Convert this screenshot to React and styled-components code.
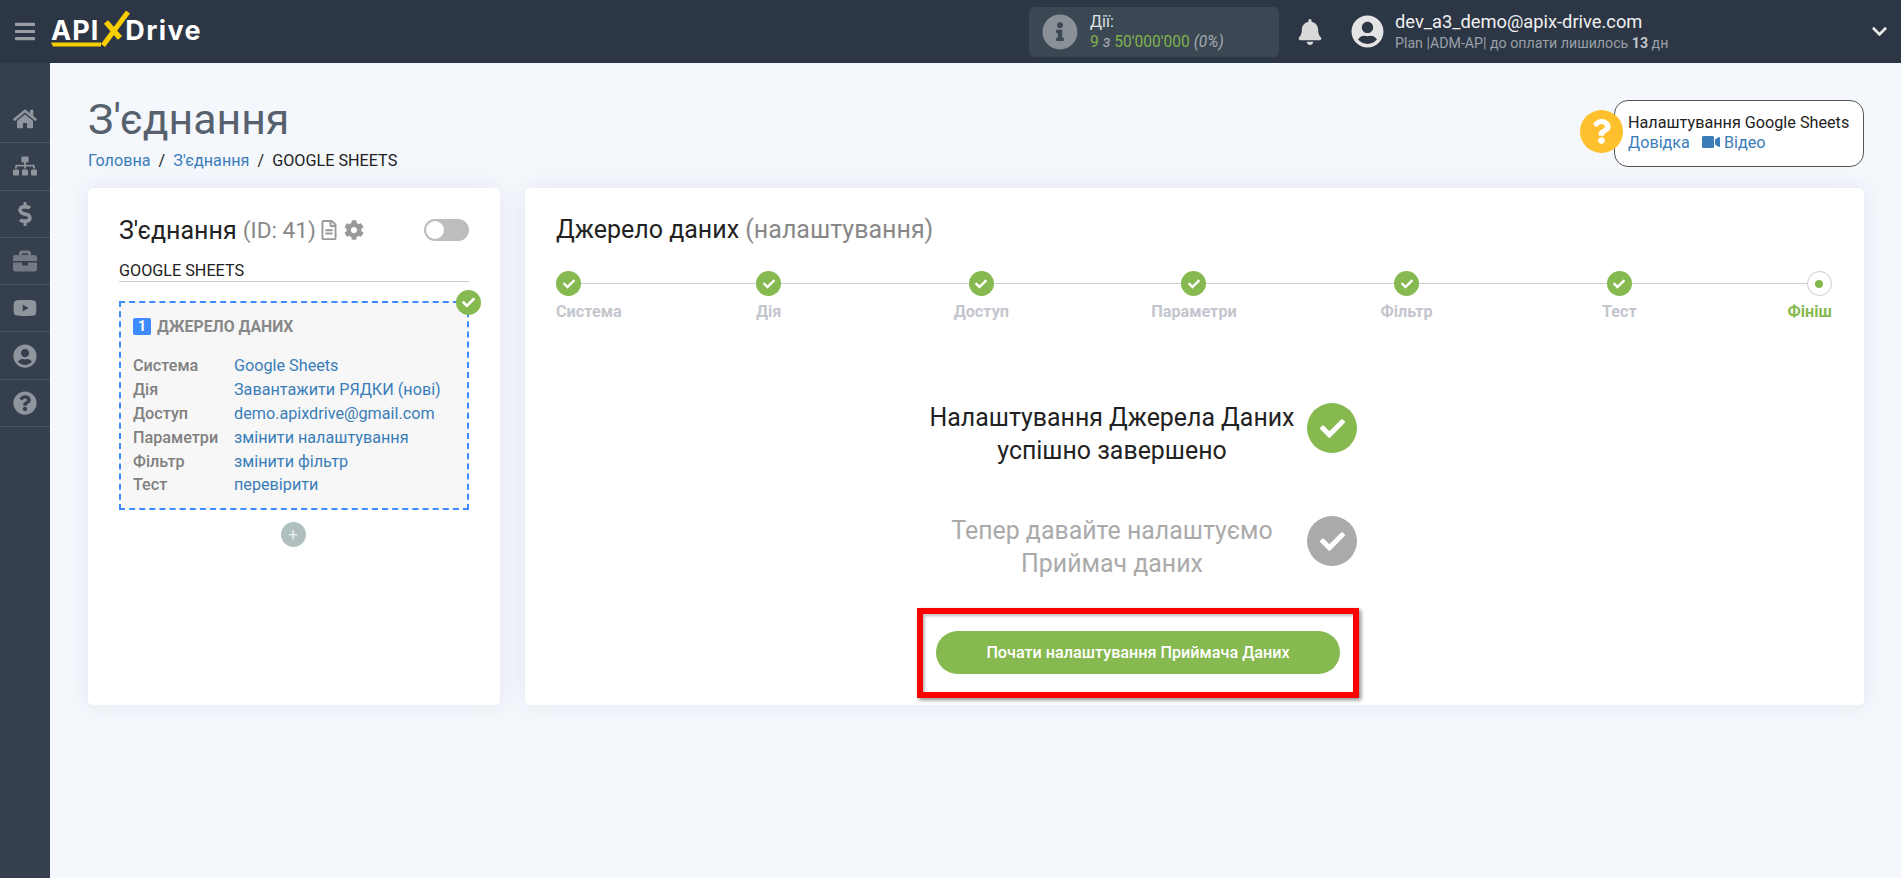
import React from 'react';
import styled, { createGlobalStyle } from 'styled-components';
import {
  FaBars, FaBell, FaBriefcase, FaCheck, FaChevronDown, FaCog, FaDollarSign, FaHome, FaInfoCircle,
  FaQuestion, FaQuestionCircle, FaRegFileAlt, FaSitemap, FaUserCircle, FaVideo, FaYoutube,
} from 'react-icons/fa';

const GlobalStyle = createGlobalStyle`
  * { box-sizing: border-box; }
  html, body { margin: 0; height: 100%; }
  body {
    background: #f4f7fc;
    font-family: Roboto, "Liberation Sans", sans-serif;
    font-size: 16px;
    color: #222;
    overflow: hidden;
  }
`;

const Page = styled.div`
  width: 1901px;
  height: 878px;
  display: grid;
  grid-template-columns: 50px 1fr;
  grid-template-rows: 63px 1fr;
`;

const TopBar = styled.header`
  grid-column: 1 / 3;
  background: #2c3644;
  display: flex;
  align-items: center;
  padding-left: 15px;
  color: #fff;
`;

const Burger = styled(FaBars)`
  width: 20px;
  height: 23px;
  color: #9a9ea4;
  margin-right: 16px;
`;

const Logo = styled.div`
  position: relative;
  display: flex;
  align-items: baseline;
  font-family: Inter, "Noto Sans", sans-serif;
  font-weight: 700;
  font-size: 27px;
  letter-spacing: 1px;
  color: #fff;
  width: 160px;
  margin-top: -2px;
`;

const LogoDrive = styled.span`
  margin-left: 26px;
  letter-spacing: 1.4px;
`;

const LogoMark = styled.svg`
  position: absolute;
  left: 0;
  top: -9px;
  width: 85px;
  height: 44px;
`;

const Actions = styled.div`
  margin-left: 818px;
  width: 250px;
  height: 50px;
  background: #3b4753;
  border-radius: 5px;
  display: flex;
  align-items: center;
  padding-left: 13px;
  gap: 12px;
`;

const ActionsIcon = styled(FaInfoCircle)`
  width: 36px;
  height: 36px;
  color: #8a9097;
`;

const ActionsText = styled.div`
  font-size: 16px;
  line-height: 20px;
  color: #dfe2e5;
`;

const ActionsCount = styled.div`
  color: #7fb24d;
  font-size: 15.6px;
  em { color: #a5abb1; }
`;

const Bell = styled(FaBell)`
  width: 24px;
  height: 26px;
  color: #d9d9d9;
  margin-left: 19px;
`;

const Avatar = styled(FaUserCircle)`
  width: 33px;
  height: 33px;
  color: #e4e4e4;
  margin-left: 29px;
`;

const UserInfo = styled.div`
  margin-left: 11px;
  width: 476px;
`;

const UserMail = styled.div`
  font-size: 18.3px;
  line-height: 22px;
  color: #f0f0f0;
`;

const UserPlan = styled.div`
  font-size: 14.2px;
  line-height: 20px;
  color: #9aa1a9;
  b { font-weight: 700; color: #c2c6ca; }
`;

const Chevron = styled(FaChevronDown)`
  width: 17px;
  height: 17px;
  color: #e8e8e8;
`;

const Sidebar = styled.nav`
  background: #353f4d;
  padding-top: 33px;
`;

const SideItem = styled.div`
  height: 47.3px;
  border-bottom: 1px solid #4b5561;
  display: flex;
  align-items: center;
  justify-content: center;
  color: ${({ $dim }) => ($dim ? '#737a84' : '#8f959c')};
  font-size: 24px;
`;

const Main = styled.main`
  padding: 37px 37px 0 38px;
  min-width: 0;
`;

const HeadRow = styled.div`
  height: 88px;
  display: flex;
  justify-content: space-between;
  align-items: flex-start;
`;

const PageTitle = styled.h1`
  margin: -6px 0 0;
  font-weight: 400;
  font-size: 42.8px;
  line-height: 50px;
  color: #56616d;
`;

const Crumbs = styled.div`
  display: flex;
  gap: 8px;
  margin-top: 7px;
  font-size: 16.2px;
  line-height: 20px;
  color: #222;
`;

const TextLink = styled.a`
  color: #3a7db9;
  text-decoration: none;
`;

const HelpWrap = styled.div`
  position: relative;
  width: 250px;
  height: 67px;
  background: #fff;
  border: 1px solid #555;
  border-radius: 14px;
  padding: 12px 0 0 13px;
  font-size: 16.2px;
  line-height: 20px;
`;

const HelpBadge = styled.div`
  position: absolute;
  left: -35px;
  top: 9px;
  width: 43px;
  height: 43px;
  border-radius: 50%;
  background: #fec12d;
  color: #fff;
  display: flex;
  align-items: center;
  justify-content: center;
  font-size: 25px;
`;

const HelpLinks = styled.div`
  display: flex;
  align-items: center;
  gap: 12px;
  svg { margin-right: 4px; vertical-align: -3px; font-size: 18px; }
`;

const Cards = styled.div`
  display: grid;
  grid-template-columns: 412px 1fr;
  gap: 25px;
`;

const Card = styled.section`
  background: #fff;
  border-radius: 5px;
  box-shadow: 0 0 24px rgba(40, 60, 90, 0.08);
  height: 517px;
`;

const LeftCard = styled(Card)`
  padding: 27px 31px 0;
`;

const ConnTitle = styled.div`
  display: flex;
  align-items: center;
  height: 30px;
  font-size: 25px;
  color: #222;
  white-space: nowrap;
`;

const Muted = styled.span`
  color: #888;
`;

const ConnId = styled(Muted)`
  font-size: 22.6px;
`;

const ConnIcons = styled.span`
  display: flex;
  align-items: center;
  gap: 5px;
  margin-left: 3px;
  color: #999;
  font-size: 20px;
`;

const Toggle = styled.span`
  margin-left: auto;
  width: 45px;
  height: 22px;
  border-radius: 11px;
  background: #bdbdbd;
  padding: 2px;
  &::before {
    content: '';
    display: block;
    width: 18px;
    height: 18px;
    border-radius: 50%;
    background: #fff;
  }
`;

const ConnName = styled.div`
  margin-top: 11px;
  height: 26px;
  padding-top: 4px;
  line-height: 21px;
  font-size: 16.2px;
  color: #222;
  border-bottom: 1px solid #ccc;
`;

const SourceBox = styled.div`
  position: relative;
  margin-top: 19px;
  height: 209px;
  background: #f7f7f7;
  border: 2px dashed #3e8bff;
  padding: 14px 12px 0;
`;

const DoneDot = styled.span`
  position: absolute;
  display: flex;
  align-items: center;
  justify-content: center;
  top: -13px;
  right: -14px;
  width: 25px;
  height: 25px;
  border-radius: 50%;
  background: #86b94f;
  color: #fff;
  font-size: 13px;
`;

const SourceHead = styled.div`
  display: flex;
  align-items: center;
  gap: 6px;
  height: 18px;
  font-size: 15.8px;
  font-weight: 700;
  color: #888;
`;

const SourceNum = styled.span`
  width: 18px;
  height: 17px;
  border-radius: 2px;
  background: #3e8bff;
  color: #fff;
  font-size: 14px;
  display: flex;
  align-items: center;
  justify-content: center;
`;

const Rows = styled.div`
  display: grid;
  grid-template-columns: 101px 1fr;
  grid-auto-rows: 23.8px;
  margin-top: 19px;
  align-items: center;
  font-size: 16.2px;
  white-space: nowrap;
`;

const RowKey = styled.span`
  color: #808080;
  font-weight: 500;
`;

const AddWrap = styled.div`
  display: flex;
  justify-content: center;
  margin-top: 12px;
  padding-right: 2px;
`;

const AddBtn = styled.span`
  width: 25px;
  height: 25px;
  border-radius: 50%;
  background: #b0c0c0;
  color: #e9eeee;
  font-size: 17px;
  line-height: 24px;
  text-align: center;
`;

const RightCard = styled(Card)`
  padding: 27px 32px 0 31px;
`;

const StepTitle = styled.div`
  font-size: 25px;
  line-height: 30px;
  color: #222;
`;

const Stepper = styled.div`
  position: relative;
  display: flex;
  justify-content: space-between;
  margin-top: 26px;
  &::before {
    content: '';
    position: absolute;
    top: 12px;
    left: 0;
    right: 12px;
    height: 1px;
    background: #ccc;
  }
`;

const Step = styled.div`
  position: relative;
  width: 0;
  display: flex;
  flex-direction: column;
  align-items: ${({ $align }) => $align};
  white-space: nowrap;
`;

const StepDot = styled.span`
  width: 25px;
  height: 25px;
  border-radius: 50%;
  flex: none;
  display: flex;
  align-items: center;
  justify-content: center;
  color: #fff;
  font-size: 12px;
  background: #86b94f;
`;

const FinishDot = styled(StepDot)`
  background: #fff;
  border: 1px solid #ccc;
  &::before {
    content: '';
    width: 8px;
    height: 8px;
    border-radius: 50%;
    background: #86b94f;
  }
`;

const StepLabel = styled.span`
  margin-top: 6px;
  font-size: 16.2px;
  line-height: 20px;
  font-weight: 700;
  color: ${({ $active }) => ($active ? '#86b94f' : '#c3c6cd')};
`;

const Result = styled.div`
  width: 442px;
  margin: 80px 0 0 361px;
`;

const Message = styled.div`
  display: grid;
  grid-template-columns: 390px 50px;
  margin-bottom: ${({ $gap }) => $gap}px;
`;

const MessageText = styled.div`
  text-align: center;
  font-size: 24.9px;
  line-height: 32.5px;
  color: ${({ $off }) => ($off ? '#aaa' : '#222')};
`;

const MessageDot = styled.span`
  width: 50px;
  height: 50px;
  margin-top: 1px;
  border-radius: 50%;
  display: flex;
  align-items: center;
  justify-content: center;
  color: #fff;
  font-size: 25px;
  background: ${({ $off }) => ($off ? '#aaa' : '#86b94f')};
`;

const RedFrame = styled.div`
  border: 6px solid #f00;
  box-shadow: 2px 2px 4px rgba(0, 0, 0, 0.45), inset 2px 2px 3px rgba(0, 0, 0, 0.25);
  padding: 17px 13px 18px;
`;

const StartButton = styled.button`
  display: block;
  width: 404px;
  height: 43px;
  border: 0;
  border-radius: 22px;
  background: #86b94f;
  color: #fff;
  font-family: inherit;
  font-size: 16.2px;
  font-weight: 500;
`;

const sideIcons = [FaHome, FaSitemap, FaDollarSign, FaBriefcase, FaYoutube, FaUserCircle, FaQuestionCircle];

const sourceRows = [
  ['Система', 'Google Sheets'],
  ['Дія', 'Завантажити РЯДКИ (нові)'],
  ['Доступ', 'demo.apixdrive@gmail.com'],
  ['Параметри', 'змінити налаштування'],
  ['Фільтр', 'змінити фільтр'],
  ['Тест', 'перевірити'],
];

const steps = ['Система', 'Дія', 'Доступ', 'Параметри', 'Фільтр', 'Тест'];

export default function App() {
  return (
    <Page>
      <GlobalStyle />
      <TopBar>
        <Burger />
        <Logo>
          API
          <LogoDrive>Drive</LogoDrive>
          <LogoMark viewBox="0 0 85 44">
            <path d="M0 37.5 H50 V41.5 H2 Z" fill="#f7cf00" />
            <path d="M52 40.5 L77 7" stroke="#f7cf00" strokeWidth="5" fill="none" />
            <path d="M55 17 L69 33" stroke="#f7cf00" strokeWidth="5.5" fill="none" />
          </LogoMark>
        </Logo>
        <Actions>
          <ActionsIcon />
          <ActionsText>
            Дії:
            <ActionsCount>9 <em>з</em> 50'000'000 <em>(0%)</em></ActionsCount>
          </ActionsText>
        </Actions>
        <Bell />
        <Avatar />
        <UserInfo>
          <UserMail>dev_a3_demo@apix-drive.com</UserMail>
          <UserPlan>Plan |ADM-AP| до оплати лишилось <b>13</b> дн</UserPlan>
        </UserInfo>
        <Chevron />
      </TopBar>
      <Sidebar>
        {sideIcons.map((Icon, i) => (
          <SideItem key={i} $dim={Icon === FaBriefcase}><Icon /></SideItem>
        ))}
      </Sidebar>
      <Main>
        <HeadRow>
          <div>
            <PageTitle>З'єднання</PageTitle>
            <Crumbs>
              <TextLink>Головна</TextLink> / <TextLink>З'єднання</TextLink> / <span>GOOGLE SHEETS</span>
            </Crumbs>
          </div>
          <HelpWrap>
            <HelpBadge><FaQuestion /></HelpBadge>
            Налаштування Google Sheets
            <HelpLinks>
              <TextLink>Довідка</TextLink>
              <TextLink><FaVideo />Відео</TextLink>
            </HelpLinks>
          </HelpWrap>
        </HeadRow>
        <Cards>
          <LeftCard>
            <ConnTitle>
              З'єднання&nbsp;<ConnId>(ID: 41)</ConnId>
              <ConnIcons><FaRegFileAlt /><FaCog /></ConnIcons>
              <Toggle />
            </ConnTitle>
            <ConnName>GOOGLE SHEETS</ConnName>
            <SourceBox>
              <DoneDot><FaCheck /></DoneDot>
              <SourceHead><SourceNum>1</SourceNum>ДЖЕРЕЛО ДАНИХ</SourceHead>
              <Rows>
                {sourceRows.map(([key, value]) => (
                  <React.Fragment key={key}>
                    <RowKey>{key}</RowKey>
                    <TextLink>{value}</TextLink>
                  </React.Fragment>
                ))}
              </Rows>
            </SourceBox>
            <AddWrap><AddBtn>+</AddBtn></AddWrap>
          </LeftCard>
          <RightCard>
            <StepTitle>Джерело даних <Muted>(налаштування)</Muted></StepTitle>
            <Stepper>
              {steps.map((label, i) => (
                <Step key={label} $align={i === 0 ? 'flex-start' : 'center'}>
                  <StepDot><FaCheck /></StepDot>
                  <StepLabel>{label}</StepLabel>
                </Step>
              ))}
              <Step $align="flex-end">
                <FinishDot />
                <StepLabel $active>Фініш</StepLabel>
              </Step>
            </Stepper>
            <Result>
              <Message $gap={48}>
                <MessageText>Налаштування Джерела Даних<br />успішно завершено</MessageText>
                <MessageDot><FaCheck /></MessageDot>
              </Message>
              <Message $gap={28}>
                <MessageText $off>Тепер давайте налаштуємо<br />Приймач даних</MessageText>
                <MessageDot $off><FaCheck /></MessageDot>
              </Message>
              <RedFrame>
                <StartButton>Почати налаштування Приймача Даних</StartButton>
              </RedFrame>
            </Result>
          </RightCard>
        </Cards>
      </Main>
    </Page>
  );
}
